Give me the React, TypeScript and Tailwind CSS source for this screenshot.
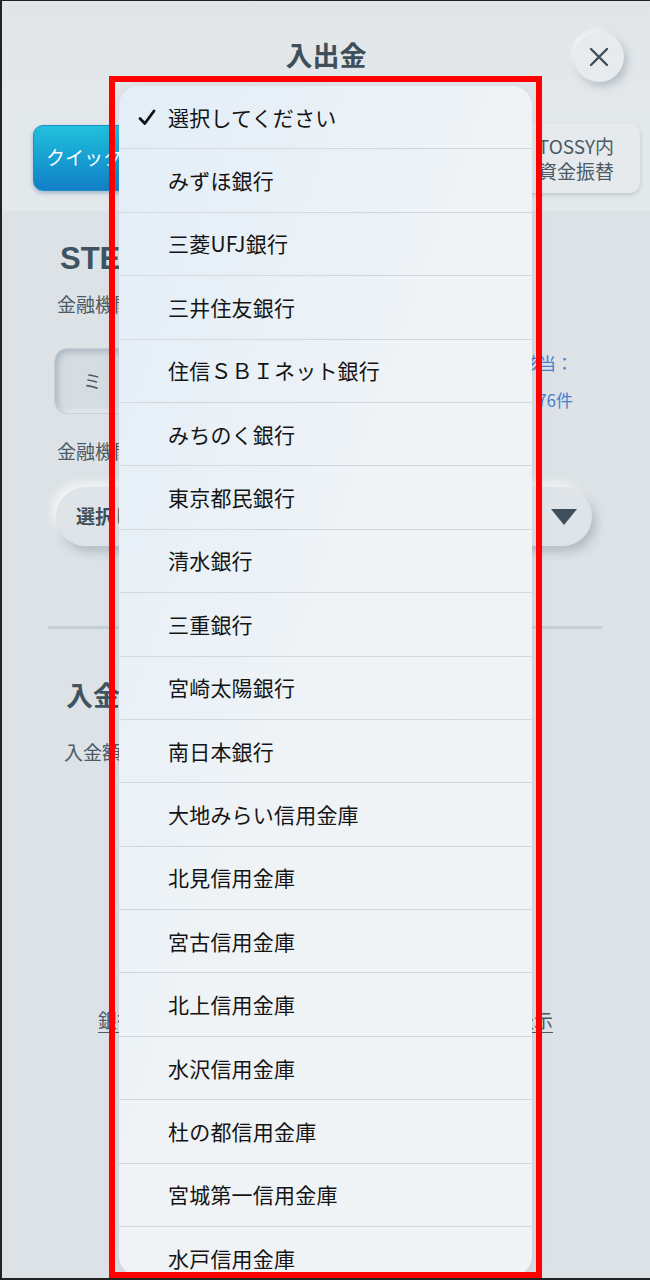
import React from "react";

const banks = [
  "選択してください",
  "みずほ銀行",
  "三菱UFJ銀行",
  "三井住友銀行",
  "住信ＳＢＩネット銀行",
  "みちのく銀行",
  "東京都民銀行",
  "清水銀行",
  "三重銀行",
  "宮崎太陽銀行",
  "南日本銀行",
  "大地みらい信用金庫",
  "北見信用金庫",
  "宮古信用金庫",
  "北上信用金庫",
  "水沢信用金庫",
  "杜の都信用金庫",
  "宮城第一信用金庫",
  "水戸信用金庫",
];

const font = { fontFamily: '"Noto Sans CJK JP", "Noto Sans", sans-serif' };

function Check() {
  return (
    <svg width="18" height="17" viewBox="0 0 18 17" fill="none">
      <path d="M2 9.5 L6.8 14.5 L16 2" stroke="#111" strokeWidth="2.8" strokeLinecap="round" strokeLinejoin="round" />
    </svg>
  );
}

function Picker() {
  return (
    <div className="absolute left-[117px] top-[85px] w-[413px] h-[1190px] overflow-hidden rounded-[20px] bg-gradient-to-br from-[#e3eef8] via-[#eff3f6] to-[#f1f4f7] shadow-[0_4px_18px_rgba(40,60,80,0.12)]">
      <ul>
        {banks.map((name, i) => (
          <li
            key={name}
            className="box-border h-[63.4px] border-b border-[#d2d8dd] flex items-center pl-[19px]"
          >
            <span className="w-[30px] flex items-center">{i === 0 && <Check />}</span>
            <span className="text-[21px] text-[#141414] tracking-[0.2px] leading-none">{name}</span>
          </li>
        ))}
      </ul>
    </div>
  );
}

export default function App() {
  return (
    <div
      className="relative w-[650px] h-[1280px] overflow-hidden border-l-2 border-t border-b-2 border-[#222] bg-[#dce2e6]"
      style={font}
    >
      {/* header */}
      <header className="h-[105px] grid grid-cols-[1fr_auto_1fr] items-center bg-gradient-to-b from-[#e0e5e8] to-[#e4e8eb] shadow-[0_2px_3px_rgba(120,135,150,0.35)]">
        <div />
        <h1 className="text-[27px] font-bold text-[#3e4f5b] pt-[4px]">入出金</h1>
        <div className="flex justify-end pr-[26px] pt-[6px]">
          <button className="w-[50px] h-[50px] rounded-full bg-[#e7ebee] shadow-[3px_4px_8px_rgba(120,135,150,0.45),-2px_-2px_5px_rgba(255,255,255,0.8)] flex items-center justify-center">
            <svg width="22" height="22" viewBox="0 0 22 22">
              <path d="M3 3 L19 19 M19 3 L3 19" stroke="#3e4f5b" strokeWidth="2.4" strokeLinecap="round" />
            </svg>
          </button>
        </div>
      </header>

      {/* tabs */}
      <div className="h-[105px] bg-[#e3e8eb] flex items-center gap-[12px] pl-[31px] pr-[10px] pb-[2px]">
        <div className="w-[150px] h-[66px] rounded-[10px] bg-gradient-to-b from-[#22c1dc] to-[#137fc7] border border-[#1a8fc9] flex items-center pl-[12px] text-white text-[19px] shadow-[0_2px_4px_rgba(0,60,120,0.3)]">
          クイック入金
        </div>
        <div className="flex-1 h-[66px] rounded-[10px] bg-[#e6eaed] flex items-center justify-center text-[#4b5a66] text-[19px]">
          銀行振込
        </div>
        <div className="w-[140px] h-[70px] rounded-[10px] bg-[#e6eaed] shadow-[0_2px_4px_rgba(120,135,150,0.35)] flex flex-col justify-center items-end pr-[26px] text-[#4b5a66] text-[19px] leading-[25px]">
          <span>TOSSY内</span>
          <span>資金振替</span>
        </div>
      </div>

      {/* step 1 */}
      <section className="pl-[46px] pr-[48px]">
        <h2 className="pl-[12px] pt-[32px] text-[31px] font-bold text-[#3f5361] leading-none" style={{ fontFamily: '"Liberation Sans", "Noto Sans CJK JP", sans-serif' }}>
          STEP 1
        </h2>
        <p className="pl-[9px] mt-[20px] text-[19px] text-[#4b5a66] leading-none">金融機関名を入力</p>
        <div className="mt-[31px] flex items-center gap-[20px] pl-[6px]">
          <div className="flex-1 h-[66px] rounded-[13px] bg-[#d6dde2] border border-[#c7cfd5] shadow-[inset_3px_3px_6px_rgba(120,135,150,0.45),inset_-2px_-2px_4px_rgba(255,255,255,0.6)] flex items-center pl-[28px] text-[19px] text-[#4b5a66]">
            ミ
          </div>
          <div className="w-[70px] flex flex-col items-end text-[17px] text-[#4a7fd0] leading-[37px] mr-[29px]">
            <span>該当：</span>
            <span>76件</span>
          </div>
        </div>
        <p className="pl-[9px] mt-[23px] text-[19px] text-[#4b5a66] leading-none">金融機関を選択</p>
        <div className="mt-[27px] ml-[8px] mr-[10px] h-[59px] rounded-full bg-[#dfe4e8] shadow-[4px_6px_10px_rgba(120,135,150,0.4),-4px_-4px_8px_rgba(255,255,255,0.75)] flex items-center justify-between pl-[20px] pr-[15px]">
          <span className="text-[19px] font-bold text-[#3e4f5b]">選択してください</span>
          <svg width="26" height="18" viewBox="0 0 26 18">
            <path d="M0 1 L26 1 L13 17 Z" fill="#3e4f5b" />
          </svg>
        </div>
        <div className="mt-[80px] h-[3px] bg-[#c7ced3]" />
      </section>

      {/* step 2 */}
      <section className="pl-[46px] pr-[48px]">
        <h2 className="pl-[18px] mt-[52px] text-[27px] font-bold text-[#3f5361] leading-none">入金額</h2>
        <p className="pl-[16px] mt-[34px] text-[19px] text-[#4b5a66] leading-none">入金額を入力してください</p>
        <div className="mt-[249px] flex justify-between pl-[50px] pr-[49px] text-[19px] text-[#4b5a66] leading-none">
          <span className="underline underline-offset-4">銀行振込について</span>
          <span className="underline underline-offset-4">手数料を表示</span>
        </div>
      </section>

      <Picker />

      {/* annotation frame */}
      <div className="absolute left-[107px] top-[75px] w-[433px] h-[1202px] border-[6px] border-[#ff0000]" />
    </div>
  );
}
